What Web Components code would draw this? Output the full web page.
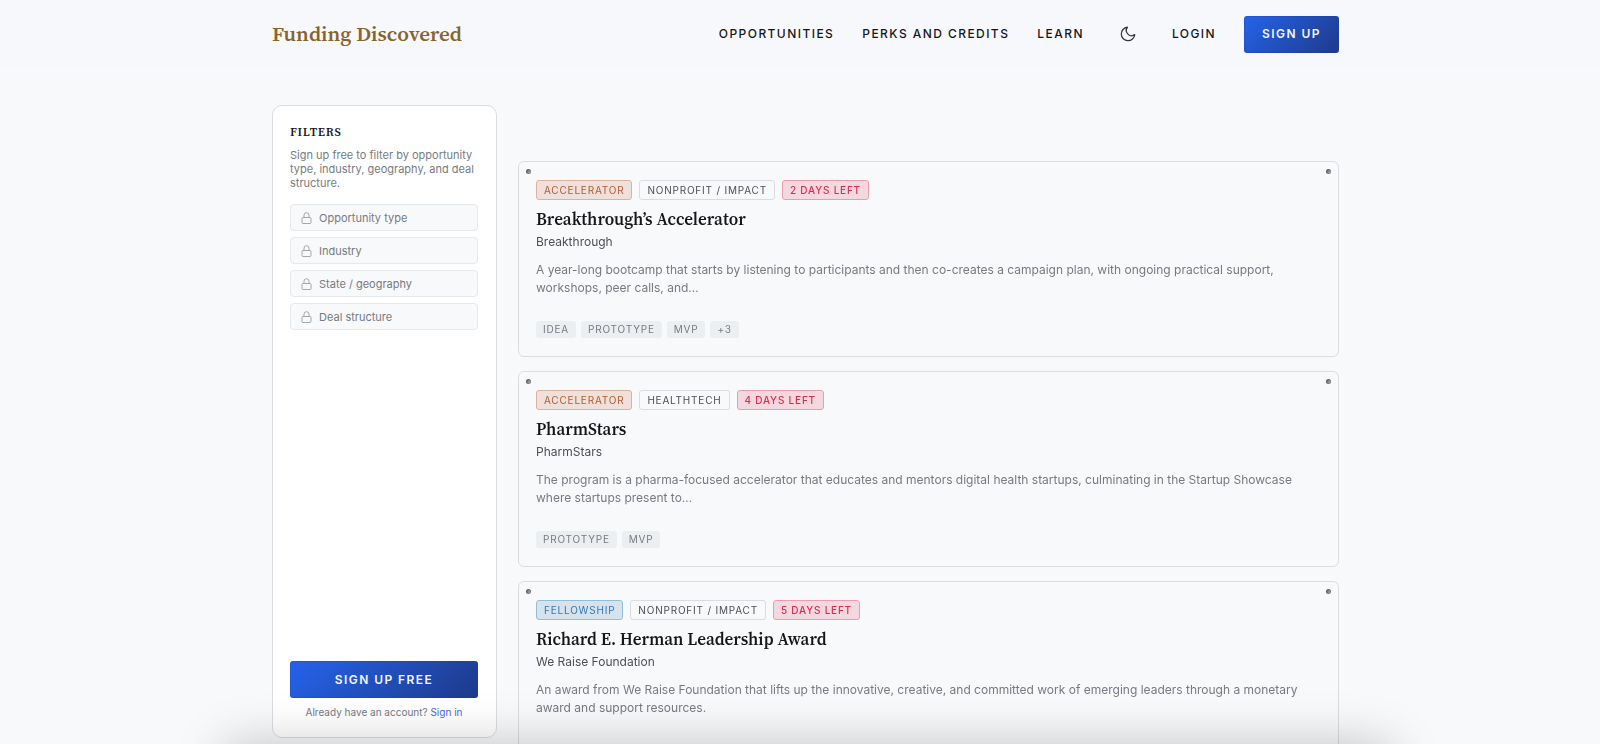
<!DOCTYPE html>
<html lang="en">
<head>
<meta charset="utf-8">
<meta name="viewport" content="width=device-width, initial-scale=1">
<title>Funding Discovered</title>
<style>
  :root {
    --serif: "Source Serif 4", "Source Serif Pro", "Noto Serif CJK SC", "Liberation Serif", serif;
    --ink: #14161a;
    --muted: #777a82;
    --line: #d9dce1;
    --page: #f7f9fb;
    --cta: linear-gradient(135deg, #2563eb, #1e3a8a);
  }
  body { margin: 0; background: var(--page); color: var(--ink); font-family: Inter, sans-serif; }
</style>
</head>
<body>
<funding-app></funding-app>

<script>
const define = (name, html) => customElements.define(name, class extends HTMLElement {
  constructor() {
    super();
    this.attachShadow({ mode: 'open' }).innerHTML = html;
  }
});

define('cta-button', `
  <style>
    :host { display: block; }
    button { box-sizing: border-box; width: 100%; height: 37px; padding: 0 17px; border: 1px solid #1e3a8a40; border-radius: 3px;
      background: var(--cta); background-origin: border-box; color: #f4f6ff; font: 600 12px/16px Inter, sans-serif;
      letter-spacing: 0.12em; white-space: nowrap; cursor: pointer; }
  </style>
  <button type="button"><slot></slot></button>`);

define('nav-link', `
  <style>
    :host { display: block; }
    a { display: block; color: var(--ink); text-decoration: none; font: 500 12px/16px Inter, sans-serif; letter-spacing: 0.12em; white-space: nowrap; }
  </style>
  <a href="#"><slot></slot></a>`);

define('theme-toggle', `
  <style>
    :host { display: block; }
    button { display: grid; place-items: center; width: 32px; height: 32px; padding: 0; border: 0; background: none; color: #33363c; cursor: pointer; }
  </style>
  <button type="button" aria-label="Toggle theme">
    <svg width="18" height="18" viewBox="0 0 24 24" fill="none" stroke="currentColor" stroke-width="1.7" stroke-linecap="round" stroke-linejoin="round"><path d="M21 12.79A9 9 0 1 1 11.21 3 7 7 0 0 0 21 12.79z"/></svg>
  </button>`);

define('site-header', `
  <style>
    :host { display: block; background: #f7f8fb; padding-left: 11px; }
    .bar { display: flex; align-items: center; justify-content: space-between; max-width: 1067px; height: 68px; padding-bottom: 1px; margin: 0 auto; }
    .brand { color: #86642f; text-decoration: none; font: 600 21px/28px var(--serif); white-space: nowrap; }
    nav { display: flex; align-items: center; gap: 28px; }
  </style>
  <header class="bar">
    <a class="brand" href="#">Funding Discovered</a>
    <nav>
      <nav-link>OPPORTUNITIES</nav-link>
      <nav-link>PERKS AND CREDITS</nav-link>
      <nav-link>LEARN</nav-link>
      <theme-toggle></theme-toggle>
      <nav-link>LOGIN</nav-link>
      <cta-button>SIGN UP</cta-button>
    </nav>
  </header>`);

define('locked-filter', `
  <style>
    :host { display: block; }
    button { box-sizing: border-box; display: flex; align-items: center; gap: 7px; width: 100%; height: 27px; padding: 0 10px;
      border: 1px solid #e6e9ec; border-radius: 4px; background: #f8f9fb; color: var(--muted); font: 400 11px/14px Inter, sans-serif; text-align: left; }
    svg { color: #a4a7ad; }
  </style>
  <button type="button">
    <svg width="11" height="12" viewBox="0 0 11 12" fill="none" stroke="currentColor"><rect x="1" y="5.5" width="9" height="6" rx="1"/><path d="M3 5.5V3.2a2.5 2.5 0 0 1 5 0v2.3"/></svg>
    <slot></slot>
  </button>`);

define('filter-panel', `
  <style>
    :host { box-sizing: border-box; display: flex; flex-direction: column; position: sticky; top: 105px; height: calc(100vh - 111px); min-height: 400px;
      padding: 18px 18px 17px 17px; border: 1px solid var(--line); border-radius: 10px; background: #fff; }
    h2 { margin: 0 0 8px; font: 600 12px/16px var(--serif); letter-spacing: 0.06em; }
    p { margin: 0; color: var(--muted); font-size: 11px; line-height: 14px; }
    .list { display: grid; gap: 6px; margin: 14px 0 auto; }
    .account { margin-top: 6px; font-size: 10px; line-height: 16px; text-align: center; }
    .account a { color: #4f63ee; text-decoration: none; }
  </style>
  <h2>FILTERS</h2>
  <p>Sign up free to filter by opportunity type, industry, geography, and deal structure.</p>
  <div class="list">
    <locked-filter>Opportunity type</locked-filter>
    <locked-filter>Industry</locked-filter>
    <locked-filter>State / geography</locked-filter>
    <locked-filter>Deal structure</locked-filter>
  </div>
  <cta-button>SIGN UP FREE</cta-button>
  <p class="account">Already have an account? <a href="#">Sign in</a></p>`);

define('tag-label', `
  <style>
    :host { box-sizing: border-box; display: block; padding: 0 7px; border: 1px solid var(--line); border-radius: 3px; color: #4c4f56;
      font-size: 10px; line-height: 18px; letter-spacing: 0.08em; white-space: nowrap; }
    :host([kind="accelerator"]) { color: #b45a30; background: #eee0db; border-color: #dfb09c; }
    :host([kind="fellowship"]) { color: #3478b4; background: #d6e3ed; border-color: #93bcd9; }
    :host([kind="deadline"]) { color: #dc2f4b; background: #f4d8e0; border-color: #ef9bae; font-weight: 500; }
    :host([kind="stage"]) { border: 0; color: var(--muted); background: #eceff2; line-height: 17px; }
  </style>
  <slot></slot>`);

define('opportunity-card', `
  <style>
    :host { box-sizing: border-box; display: block; position: relative; padding: 18px 18px 18px 17px; border: 1px solid var(--line); border-radius: 6px; }
    :host::before, :host::after { content: ""; position: absolute; top: 7px; width: 5px; height: 5px; border-radius: 50%;
      background: radial-gradient(circle at 65% 60%, #a3a5a9, #4b4d52 80%); }
    :host::before { left: 7px; }
    :host::after { right: 7px; }
    .tags { display: flex; flex-wrap: wrap; gap: 7px; margin-bottom: 8px; }
    .stages { display: flex; flex-wrap: wrap; gap: 5px; margin-top: 24px; }
    h3 { margin: 0 0 3px; font: 600 17px/22px var(--serif); }
    .org { color: #4c4f56; font-size: 12px; line-height: 18px; }
    .about { margin: 10px 0 0; color: var(--muted); font-size: 12px; line-height: 18px; }
  </style>
  <article>
    <div class="tags"><slot name="tag"></slot></div>
    <h3><slot name="title"></slot></h3>
    <div class="org"><slot name="org"></slot></div>
    <p class="about"><slot></slot></p>
    <div class="stages"><slot name="stage"></slot></div>
  </article>`);

define('bottom-drawer', `
  <style>
    :host { display: block; position: fixed; left: 14%; right: 13%; top: 100%; height: 200px; border-radius: 12px;
      background: #fff; box-shadow: 0 0 50px rgba(0, 0, 0, 0.22); pointer-events: none; }
  </style>`);

define('funding-app', `
  <style>
    :host { display: block; height: 100vh; overflow: hidden; }
    main { padding: 36px 0 0 11px; }
    .columns { display: grid; grid-template-columns: 225px minmax(0, 1fr); align-items: start; gap: 21px; max-width: 1067px; margin: 0 auto; }
    .feed { display: grid; gap: 14px; padding-top: 56px; }
  </style>
  <site-header></site-header>
  <main>
    <div class="columns">
      <filter-panel></filter-panel>
      <section class="feed">
        <opportunity-card>
          <tag-label slot="tag" kind="accelerator">ACCELERATOR</tag-label>
          <tag-label slot="tag">NONPROFIT / IMPACT</tag-label>
          <tag-label slot="tag" kind="deadline">2 DAYS LEFT</tag-label>
          <span slot="title">Breakthrough’s Accelerator</span>
          <span slot="org">Breakthrough</span>
          A year-long bootcamp that starts by listening to participants and then co-creates a campaign plan, with ongoing practical support, workshops, peer calls, and…
          <tag-label slot="stage" kind="stage">IDEA</tag-label>
          <tag-label slot="stage" kind="stage">PROTOTYPE</tag-label>
          <tag-label slot="stage" kind="stage">MVP</tag-label>
          <tag-label slot="stage" kind="stage">+3</tag-label>
        </opportunity-card>
        <opportunity-card>
          <tag-label slot="tag" kind="accelerator">ACCELERATOR</tag-label>
          <tag-label slot="tag">HEALTHTECH</tag-label>
          <tag-label slot="tag" kind="deadline">4 DAYS LEFT</tag-label>
          <span slot="title">PharmStars</span>
          <span slot="org">PharmStars</span>
          The program is a pharma-focused accelerator that educates and mentors digital health startups, culminating in the Startup Showcase where startups present to…
          <tag-label slot="stage" kind="stage">PROTOTYPE</tag-label>
          <tag-label slot="stage" kind="stage">MVP</tag-label>
        </opportunity-card>
        <opportunity-card>
          <tag-label slot="tag" kind="fellowship">FELLOWSHIP</tag-label>
          <tag-label slot="tag">NONPROFIT / IMPACT</tag-label>
          <tag-label slot="tag" kind="deadline">5 DAYS LEFT</tag-label>
          <span slot="title">Richard E. Herman Leadership Award</span>
          <span slot="org">We Raise Foundation</span>
          An award from We Raise Foundation that lifts up the innovative, creative, and committed work of emerging leaders through a monetary award and support resources.
        </opportunity-card>
      </section>
    </div>
  </main>
  <bottom-drawer></bottom-drawer>`);
</script>
</body>
</html>
